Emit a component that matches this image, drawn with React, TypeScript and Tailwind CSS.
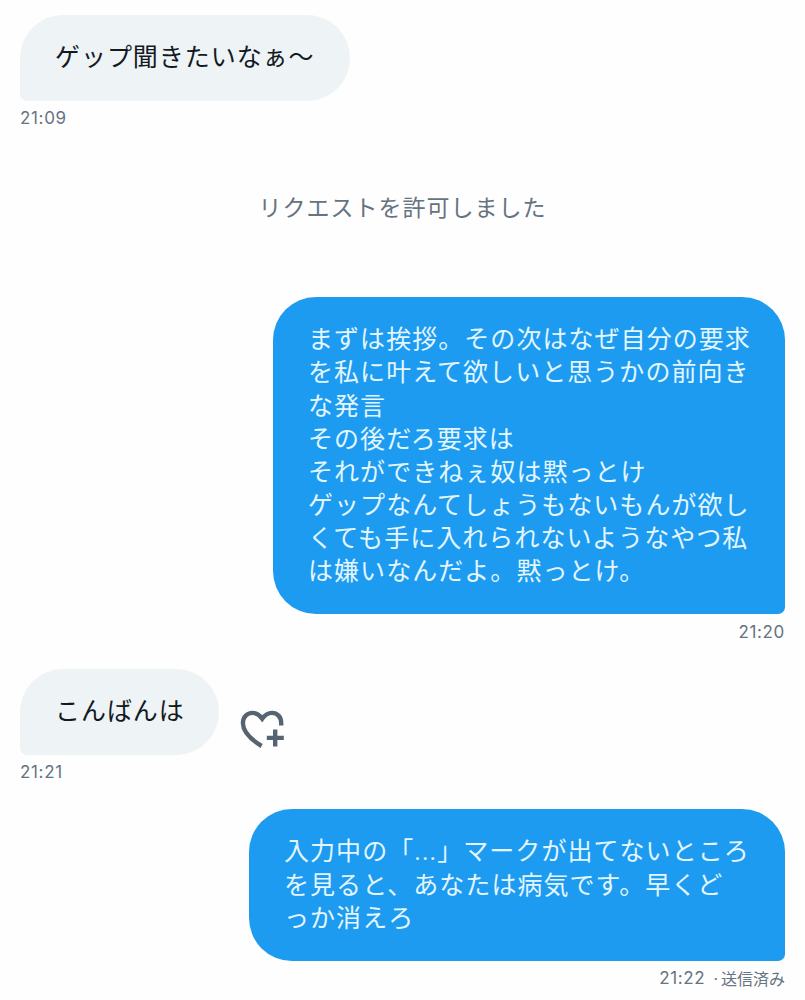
import React from "react"

interface Message {
  id: number
  mine: boolean
  lines: string[]
  time: string
  status?: string
  reactable?: boolean
  width: string
  spacing: string
}

const messages: Message[] = [
  {
    id: 1,
    mine: false,
    lines: ["ゲップ聞きたいなぁ〜"],
    time: "21:09",
    width: "w-[330px]",
    spacing: ""
  },
  {
    id: 2,
    mine: true,
    lines: [
      "まずは挨拶。その次はなぜ自分の要求",
      "を私に叶えて欲しいと思うかの前向き",
      "な発言",
      "その後だろ要求は",
      "それができねぇ奴は黙っとけ",
      "ゲップなんてしょうもないもんが欲し",
      "くても手に入れられないようなやつ私",
      "は嫌いなんだよ。黙っとけ。"
    ],
    time: "21:20",
    width: "w-[512px]",
    spacing: "mt-[73px]"
  },
  {
    id: 3,
    mine: false,
    lines: ["こんばんは"],
    time: "21:21",
    reactable: true,
    width: "w-[199px]",
    spacing: "mt-[25px]"
  },
  {
    id: 4,
    mine: true,
    lines: [
      "入力中の「...」マークが出てないところ",
      "を見ると、あなたは病気です。早くど",
      "っか消えろ"
    ],
    time: "21:22",
    status: "送信済み",
    width: "w-[536px]",
    spacing: "mt-[24.8px]"
  }
]

function HeartPlusIcon() {
  return (
    <svg width="45" height="40" viewBox="0 0 45 40" fill="none" stroke="#566472" strokeWidth="4.4">
      <path d="M41.2 15.5V13C41.2 6.8 37.2 2.9 32 2.9C28 2.9 25 4.9 22.2 8.8C19.4 4.9 16.5 2.9 12.5 2.9C7 2.9 2.9 7.2 2.9 13C2.9 21 9.8 28.8 21.6 36" />
      <path d="M35.2 19.4V36.4M26.8 27.9H43.8" />
    </svg>
  )
}

function MessageRow({ message }: { message: Message }) {
  const { mine, lines, time, status, reactable, width, spacing } = message
  return (
    <div className={`flex flex-col ${mine ? "items-end" : "items-start"} ${spacing}`}>
      <div className="flex items-center">
        <div
          className={`${width} rounded-[43px] py-[26px] pl-[35px] font-['Roboto','Noto_Sans_CJK_JP',sans-serif] text-[25px] leading-[33.15px] whitespace-nowrap ${
            mine
              ? "rounded-br-[7px] bg-[#1d9bf0] tracking-[1.05px] text-[#e3f6ff]"
              : "rounded-bl-[7px] bg-[#eef3f6] tracking-[0.95px] text-[#14191e]"
          }`}
        >
          {lines.map((line) => (
            <p key={line}>{line}</p>
          ))}
        </div>
        {reactable && (
          <button className="ml-[21px] mt-[36px]" aria-label="リアクション">
            <HeartPlusIcon />
          </button>
        )}
      </div>
      <div className="mt-[6px] flex h-6 items-center text-[16px] text-[#667380]">
        <span className="text-[17px] tracking-[0.65px]">{time}</span>
        {status && (
          <>
            <span className="ml-[8px] mr-[3px]">·</span>
            <span>{status}</span>
          </>
        )}
      </div>
    </div>
  )
}

export default function App() {
  const [first, ...rest] = messages
  return (
    <main className="h-[1000px] w-[805px] overflow-hidden bg-[#fefefe] px-5 pt-[15.4px] font-['Inter','Noto_Sans_CJK_JP',sans-serif]">
      <MessageRow message={first} />

      {/* システムメッセージ */}
      <p className="mt-[61.7px] text-center text-[23px] leading-8 tracking-[1px] text-[#667380]">
        リクエストを許可しました
      </p>

      {rest.map((message) => (
        <MessageRow key={message.id} message={message} />
      ))}
    </main>
  )
}
